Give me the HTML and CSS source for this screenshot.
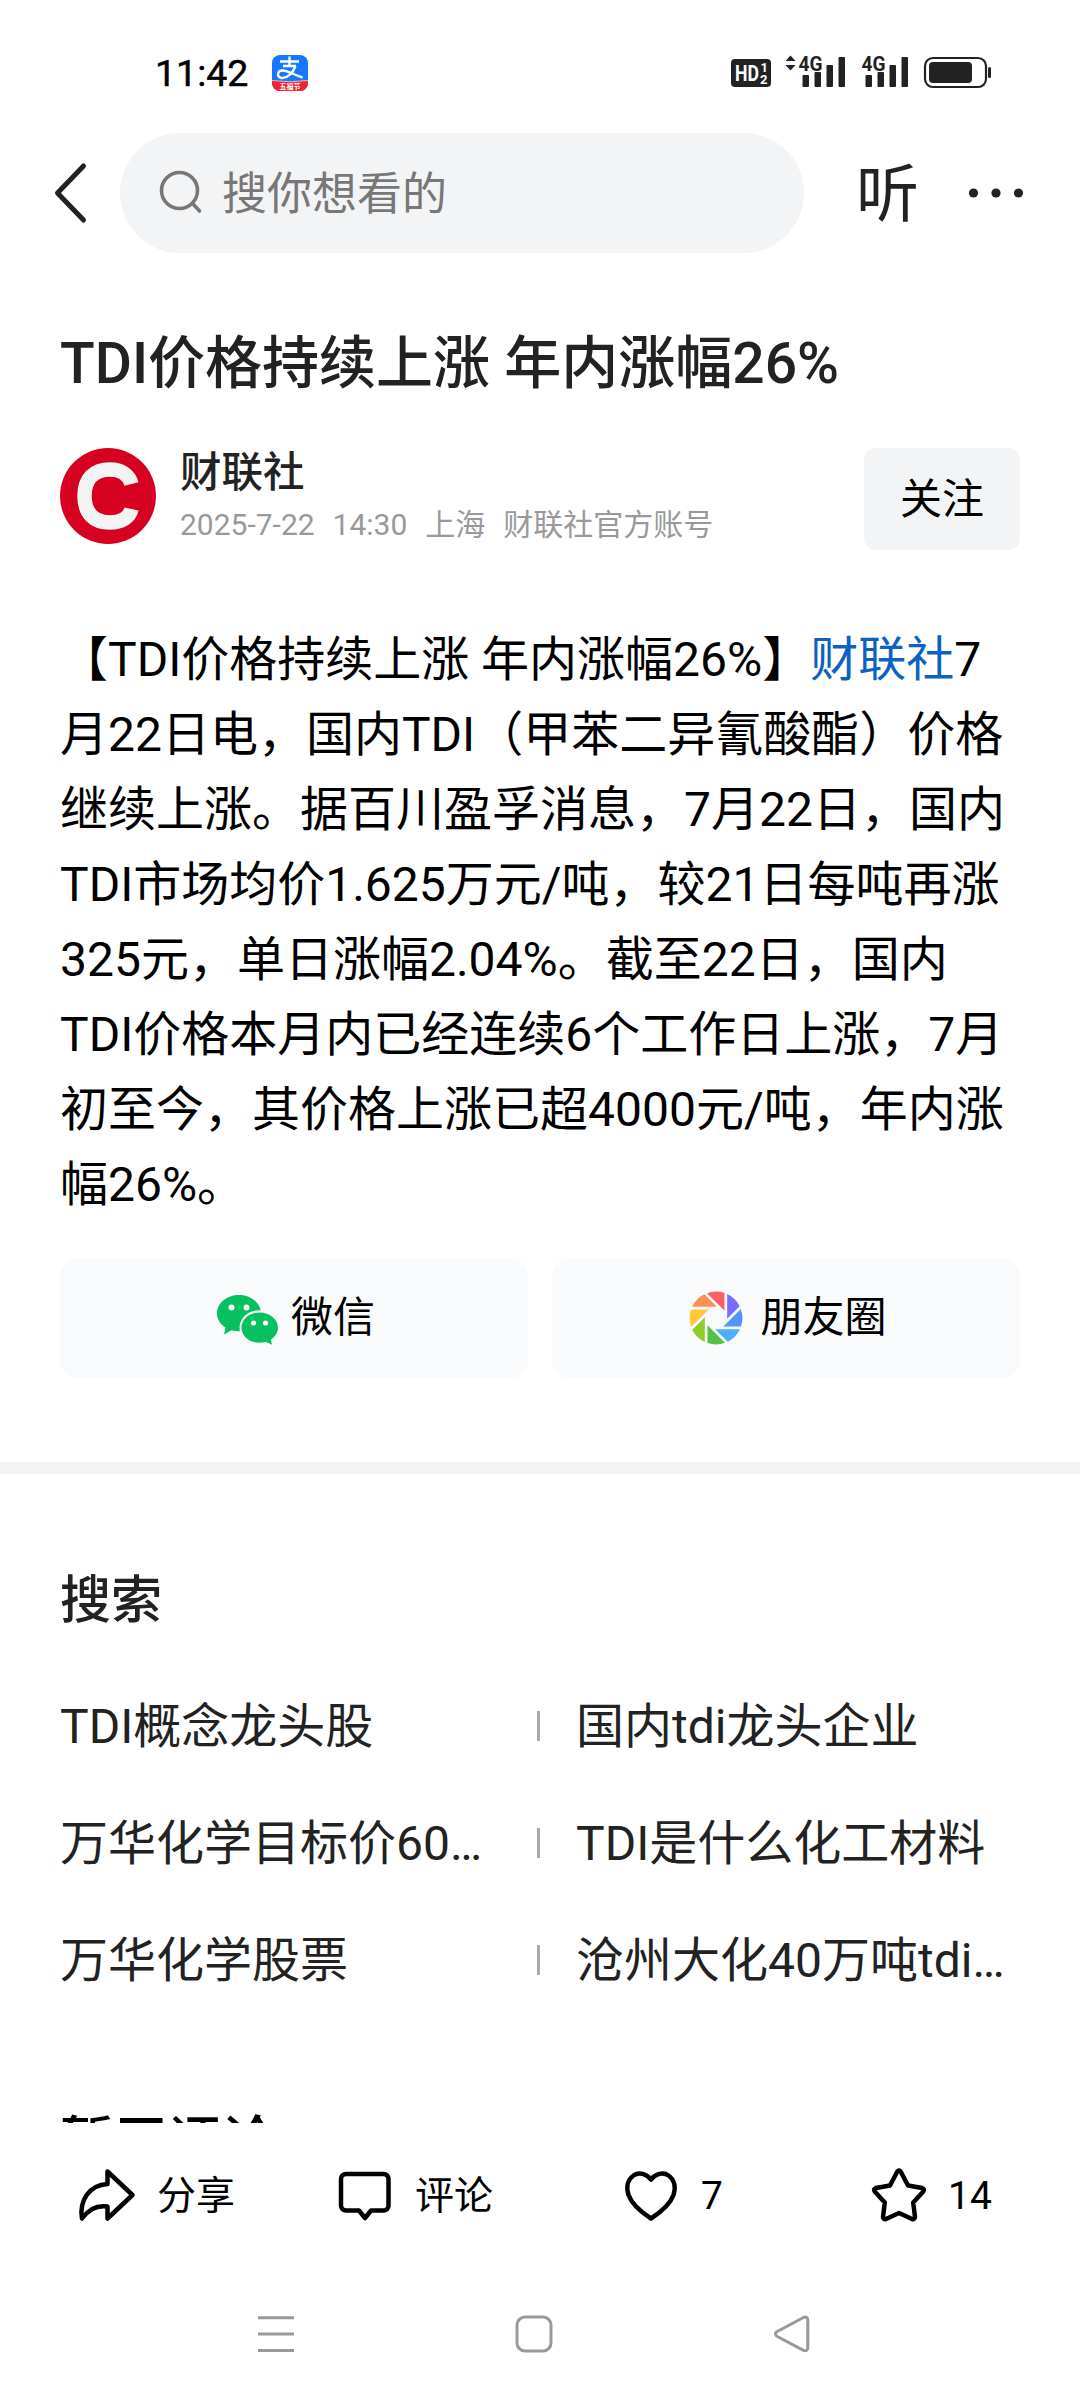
FILE: index.html
```html
<!DOCTYPE html>
<html lang="zh-CN">
<head>
    <meta charset="UTF-8">
    <meta name="viewport" content="width=device-width, initial-scale=1.0">
    <title>TDI价格持续上涨 年内涨幅26%</title>
    <link rel="stylesheet" href="styles.css">
</head>
<body>
    <div class="status-bar">
        <span class="time">11:42</span>
        <svg class="app-icon" width="36" height="36" viewBox="0 0 36 36">
            <defs>
                <clipPath id="app-clip"><rect width="36" height="36" rx="8"/></clipPath>
            </defs>
            <g clip-path="url(#app-clip)">
                <rect width="36" height="36" fill="#1677ff"/>
                <path d="M0 25.5Q18 28 36 25.5V36H0z" fill="#f5222d"/>
                <path d="M0 25.5Q18 28 36 25.5" fill="none" stroke="#ffb199" stroke-width="1"/>
            </g>
            <g fill="none" stroke="#fff" stroke-width="2.4">
                <path d="M8 6.5h19M17.5 1.5v9.5M11 11h13"/>
                <path d="M23.5 11C21 18 15 23.5 9.500 23C4.500 22 5 15.500 10.500 15.500C16 15.500 22 20 30.500 22.500"/>
            </g>
            <text x="18" y="34.200" class="app-tag">五福节</text>
        </svg>
        <div class="status-right">
            <svg width="262" height="36" viewBox="0 0 262 36">
                <rect x="0" y="4" width="40" height="28" rx="4"/>
                <text x="4" y="26" class="hd" textLength="24" lengthAdjust="spacingAndGlyphs">HD</text>
                <text x="29.500" y="17" class="hd-num">1</text>
                <text x="29" y="28.800" class="hd-num">2</text>
                <path d="M54.500 6l5-5.500 5 5.500zM54.500 10l5 5.500 5-5.500z"/>
                <text x="67.500" y="15.500" class="net" textLength="24" lengthAdjust="spacingAndGlyphs">4G</text>
                <rect x="71.500" y="20" width="6.500" height="12" rx="1"/>
                <rect x="83.500" y="17" width="6.500" height="15" rx="1"/>
                <rect x="95.500" y="10" width="6.500" height="22" rx="1"/>
                <rect x="107.500" y="2" width="6.500" height="30" rx="1"/>
                <text x="130.500" y="15.500" class="net" textLength="24" lengthAdjust="spacingAndGlyphs">4G</text>
                <rect x="134.500" y="20" width="6.500" height="12" rx="1"/>
                <rect x="146.500" y="17" width="6.500" height="15" rx="1"/>
                <rect x="158.500" y="10" width="6.500" height="22" rx="1"/>
                <rect x="170.500" y="2" width="6.500" height="30" rx="1"/>
                <rect x="194" y="3" width="61" height="29" rx="8" fill="none" stroke="#222" stroke-width="2.200"/>
                <rect x="198" y="7" width="43" height="21" rx="4"/>
                <rect x="257" y="12" width="3" height="11" rx="1.500"/>
            </svg>
        </div>
    </div>

    <header class="top-bar">
        <svg class="back" width="36" height="64" viewBox="0 0 36 64">
            <path d="M31.500 5L5.500 32l26 27" fill="none" stroke="#222" stroke-width="5" stroke-linecap="round" stroke-linejoin="round"/>
        </svg>
        <div class="search-box">
            <svg width="44" height="44" viewBox="0 0 44 44" fill="none" stroke="#777" stroke-width="3.600" stroke-linecap="round">
                <circle cx="19.500" cy="19.500" r="18"/>
                <path d="M33.500 33.500l6 6.500"/>
            </svg>
            <span>搜你想看的</span>
        </div>
        <span class="listen">听</span>
        <svg class="more" width="56" height="12" viewBox="0 0 56 12" fill="#222">
            <circle cx="5.500" cy="6" r="4.600"/>
            <circle cx="28" cy="6" r="4.600"/>
            <circle cx="50.500" cy="6" r="4.600"/>
        </svg>
    </header>

    <main>
        <article>
            <h1>TDI价格持续上涨 年内涨幅26%</h1>
            <div class="author">
                <svg width="96" height="96" viewBox="0 0 96 96">
                    <circle cx="48" cy="48" r="48" fill="#d60021"/>
                    <path d="M71.500 36C69 26.500 61 21.500 50 21.500C33.500 21.500 24.500 31 24.500 48C24.500 65 33.500 74.500 50 74.500C61 74.500 69.500 70 71.500 61" fill="none" stroke="#f3f3f3" stroke-width="14.500"/>
                </svg>
                <div class="author-info">
                    <div class="author-name">财联社</div>
                    <div class="author-meta">
                        <span>2025-7-22</span>
                        <span>14:30</span>
                        <span>上海</span>
                        <span>财联社官方账号</span>
                    </div>
                </div>
                <button class="follow">关注</button>
            </div>
            <p class="content">【TDI价格持续上涨 年内涨幅26%】<a href="#">财联社</a>7<br>月22日电，国内TDI（甲苯二异氰酸酯）价格<br>继续上涨。据百川盈孚消息，7月22日，国内<br>TDI市场均价1.625万元/吨，较21日每吨再涨<br>325元，单日涨幅2.04%。截至22日，国内<br>TDI价格本月内已经连续6个工作日上涨，7月<br>初至今，其价格上涨已超4000元/吨，年内涨<br>幅26%。</p>
            <div class="share-row">
                <button class="share-button">
                    <svg class="wechat" width="62" height="52" viewBox="0 0 62 52">
                        <path d="M22 1C10 1 0 9 0 19.500c0 6 3.300 10.700 8.500 14.200L7 40.500l7.500-4.200c2.400.7 5 1 7.500 1 12 0 22-7.500 22-17.800S34 1 22 1z" fill="#07c160"/>
                        <ellipse cx="42.500" cy="33.500" rx="20" ry="17.300" fill="#f8fafc"/>
                        <path d="M42.500 18.500c-10 0-18 6.800-18 15.200s8 15 18 15c2.200 0 4.300-.3 6.200-.9l6.300 3-1.200-5.300c4.300-2.800 7.200-7 7.200-11.800 0-8.400-8.500-15.200-18.500-15.200z" fill="#07c160"/>
                        <g fill="#f8fafc">
                            <circle cx="14.500" cy="13.500" r="3"/>
                            <circle cx="29.500" cy="13.500" r="3"/>
                            <circle cx="36.500" cy="29" r="2.600"/>
                            <circle cx="48.500" cy="29" r="2.600"/>
                        </g>
                    </svg>
                    <span>微信</span>
                </button>
                <button class="share-button">
                    <svg class="moments" width="54" height="54" viewBox="-27 -27 54 54">
                        <defs>
                            <path id="blade" d="M-9 -24.800A26.400 26.400 0 0 1 8.500 -25L8.500 -7.300z"/>
                        </defs>
                        <use href="#blade" fill="#fa6262"/>
                        <use href="#blade" fill="#7d6bff" transform="rotate(45)"/>
                        <use href="#blade" fill="#5195ff" transform="rotate(90)"/>
                        <use href="#blade" fill="#4cb0ff" transform="rotate(135)"/>
                        <use href="#blade" fill="#53c245" transform="rotate(180)"/>
                        <use href="#blade" fill="#8fcc2c" transform="rotate(225)"/>
                        <use href="#blade" fill="#ffc83f" transform="rotate(270)"/>
                        <use href="#blade" fill="#ff9150" transform="rotate(315)"/>
                    </svg>
                    <span>朋友圈</span>
                </button>
            </div>
        </article>

        <section class="related">
            <h2>搜索</h2>
            <ul class="related-list">
                <li>TDI概念龙头股</li>
                <li>国内tdi龙头企业</li>
                <li>万华化学目标价60…</li>
                <li>TDI是什么化工材料</li>
                <li>万华化学股票</li>
                <li>沧州大化40万吨tdi…</li>
            </ul>
        </section>

        <section class="comments">
            <h2>暂无评论</h2>
        </section>
    </main>

    <footer>
        <div class="actions">
            <div class="action share">
                <svg width="56" height="52" viewBox="0 0 56 52">
                    <path d="M28.500 2.500L53.500 26 28.500 49.500V37.500C18 36 9 41 3 49.500C0 32 10 16 28.500 15z"/>
                </svg>
                <span>分享</span>
            </div>
            <div class="action comment">
                <svg width="52" height="50" viewBox="0 0 52 50">
                    <path d="M7 4h37.500a5 5 0 0 1 5 5v26.500a5 5 0 0 1-5 5H32L26 48l-6-7.500H7a5 5 0 0 1-5-5V9a5 5 0 0 1 5-5z"/>
                </svg>
                <span>评论</span>
            </div>
            <div class="action like">
                <svg width="52" height="52" viewBox="0 0 52 52">
                    <path d="M26 10.500C21.500 5 14 2.500 8.500 6.500C2.500 10.500 1 18 3.500 26C7 35.500 16 43 26 49.500C36 43 45 35.500 48.500 26C51 18 49.500 10.500 43.500 6.500C38 2.500 30.500 5 26 10.500z"/>
                </svg>
                <span>7</span>
            </div>
            <div class="action fav">
                <svg width="54" height="54" viewBox="0 0 54 54">
                    <path d="M25.200 3.800Q27 1.400 28.800 3.800L36 17.500L50.200 20Q53 21.200 51.300 23.400L41.200 34.500L43 49Q42.700 51.700 40 51L27 45L14 51Q11.300 51.700 11 49L12.800 34.500L2.700 23.400Q1 21.200 3.800 20L18 17.500z"/>
                </svg>
                <span>14</span>
            </div>
        </div>
        <div class="system-nav">
            <svg width="38" height="38" viewBox="0 0 38 38"><path d="M1 2.700h36M1 19h36M1 35.400h36"/></svg>
            <svg width="38" height="38" viewBox="0 0 38 38"><rect x="2" y="2" width="34" height="34" rx="8"/></svg>
            <svg width="38" height="38" viewBox="0 0 38 38"><path d="M30.500 2.500L3.800 16.800Q1 18.900 3.800 21.200L30.500 35.400Q34.500 36.800 34.800 33V5Q34.500 1 30.500 2.500z"/></svg>
        </div>
    </footer>
</body>
</html>
```
FILE: styles.css
```css
* {
    box-sizing: border-box;
}

body {
    margin: 0;
    width: 1080px;
    height: 2400px;
    overflow: hidden;
    display: flex;
    flex-direction: column;
    font-family: Roboto, "Noto Sans CJK SC", sans-serif;
    color: #222;
    background-color: #fff;
    text-spacing-trim: space-all;
    text-autospace: no-autospace;
}

h1,
h2,
p,
ul {
    margin: 0;
    padding: 0;
}

svg {
    display: block;
    flex-shrink: 0;
    overflow: visible;
}

button {
    border: none;
    padding: 0;
    font-family: inherit;
    color: #000;
}

/* Status bar */
.status-bar {
    height: 133px;
    padding: 55px 87px 0 155px;
    display: flex;
    align-items: flex-start;
}

.time {
    width: 117px;
    font-size: 37.5px;
    line-height: 36px;
    color: #000;
    -webkit-text-stroke: 0.5px #000;
}

.app-tag {
    font-size: 7px;
    font-weight: bold;
    fill: #fff;
    text-anchor: middle;
}

.status-right {
    margin-left: auto;
    fill: #222;
}

.hd {
    font-size: 22px;
    font-weight: bold;
    fill: #fff;
}

.hd-num {
    font-size: 13px;
    font-weight: bold;
    fill: #fff;
}

.net {
    font-size: 21px;
    font-weight: bold;
}

/* Header */
.top-bar {
    height: 120px;
    padding: 0 56px 0 52px;
    display: flex;
    align-items: center;
}

.search-box {
    width: 684px;
    height: 120px;
    margin-left: 32px;
    padding-left: 40px;
    border-radius: 60px;
    background-color: #f3f4f6;
    display: flex;
    align-items: center;
    gap: 18px;
    font-size: 45px;
    line-height: 60px;
    color: #777;
}

.search-box span {
    padding-top: 3px;
}

.listen {
    margin-left: 52px;
    padding-top: 4px;
    font-size: 63px;
    line-height: 120px;
}

.more {
    margin-left: auto;
}

/* Article */
main {
    height: 1870px;
    overflow: hidden;
}

article {
    height: 1209px;
    padding: 71px 60px 0;
}

h1 {
    font-size: 57px;
    line-height: 80px;
    font-weight: 500;
}

.author {
    margin-top: 44px;
    height: 102px;
    display: flex;
    align-items: flex-start;
}

.author-info {
    margin-left: 24px;
    padding-top: 2px;
}

.author-name {
    font-size: 41.5px;
    line-height: 46px;
    font-weight: 500;
}

.author-meta {
    margin-top: 8px;
    display: flex;
    gap: 18px;
    font-size: 30px;
    line-height: 42px;
    color: #999;
}

.follow {
    margin-left: auto;
    width: 156px;
    height: 102px;
    padding-top: 2px;
    border-radius: 12px;
    background-color: #f3f4f6;
    font-size: 42px;
    line-height: 60px;
}

.content {
    margin-top: 72px;
    font-size: 48px;
    line-height: 75px;
    color: #000;
    white-space: nowrap;
}

.content a {
    color: #0b62c1;
    text-decoration: none;
}

.share-row {
    margin-top: 36px;
    display: flex;
    gap: 24px;
}

.share-button {
    flex: 1;
    height: 120px;
    padding-left: 4px;
    border-radius: 18px;
    background-color: #f8fafc;
    display: flex;
    align-items: center;
    justify-content: center;
    gap: 12px;
    font-size: 42px;
    line-height: 60px;
}

.wechat {
    margin-top: 4px;
}

.moments {
    margin-right: 5px;
}

/* Related searches */
.related {
    height: 651px;
    padding: 97px 60px 0;
    border-top: 12px solid #f3f4f6;
}

.related h2 {
    font-size: 51px;
    line-height: 60px;
    font-weight: 500;
}

.related-list {
    margin-top: 37px;
    display: grid;
    grid-template-columns: 477px 1fr;
    grid-auto-rows: 117px;
    list-style: none;
    font-size: 48px;
    line-height: 117px;
    white-space: nowrap;
}

.related-list li:nth-child(even) {
    display: flex;
    align-items: center;
}

.related-list li:nth-child(even)::before {
    content: "";
    width: 3px;
    height: 30px;
    margin: 0 36px 2px 0;
    background-color: #aaa;
}

.comments {
    padding: 0 60px;
    height: 10px;
}

.comments h2 {
    font-size: 54px;
    line-height: 60px;
    font-weight: 500;
    color: #000;
}

/* Bottom bar */
footer {
    height: 277px;
    background-color: #fff;
}

.actions {
    height: 144px;
    display: flex;
    align-items: center;
    padding-left: 79px;
    font-size: 39px;
    line-height: 60px;
    color: #000;
}

.action {
    display: flex;
    align-items: center;
}

.action span {
    padding-top: 2px;
}

.action svg {
    fill: none;
    stroke: #000;
    stroke-width: 4.5;
    stroke-linejoin: round;
}

.share {
    width: 260px;
    gap: 22px;
}

.comment {
    width: 286px;
    gap: 24px;
}

.like {
    width: 247px;
    gap: 24px;
}

.fav {
    gap: 22px;
}

.system-nav {
    padding: 48px 0 0 257px;
    display: flex;
    gap: 220px;
}

.system-nav svg {
    fill: none;
    stroke: #999;
    stroke-width: 3;
    stroke-linejoin: round;
}
```
